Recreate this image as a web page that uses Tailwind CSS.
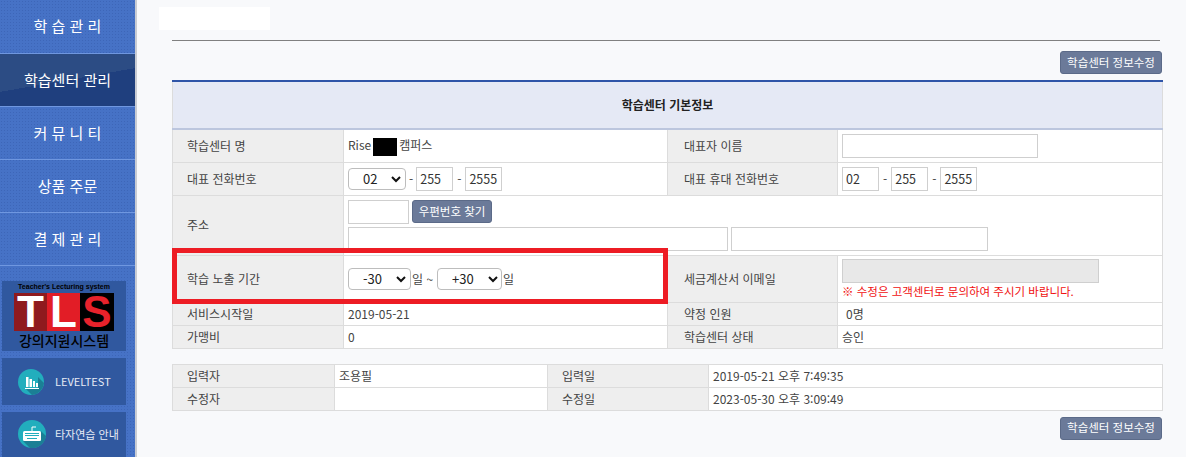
<!DOCTYPE html>
<html lang="ko">
<head>
  <meta charset="UTF-8" />
  <title>학습센터 관리</title>
  <script src="https://cdn.jsdelivr.net/npm/@tailwindcss/browser@4"></script>
</head>
<body class="bg-[#f8f9fb] font-['Noto_Sans_CJK_KR','Noto_Sans',sans-serif] text-[12px] text-[#444]">
<div class="flex h-[457px] w-[1186px] overflow-hidden">

  <!-- Sidebar -->
  <aside class="w-[137px] shrink-0 border-r-2 border-[#c9ccd3] bg-[#4672c6] bg-[radial-gradient(#3d66b8_1px,transparent_1px)] bg-[size:3px_3px] text-white">
    <nav class="text-[15px] text-center">
      <a class="flex h-[54px] items-center justify-center border-b border-[#6f97e0]">학 습 관 리</a>
      <a class="flex h-[53px] items-center justify-center border-b border-[#6f97e0] bg-[linear-gradient(170deg,#2c4c84_0%,#2c4c84_50%,#1f3f7e_50%,#1f3f7e_100%)]">학습센터 관리</a>
      <a class="flex h-[53px] items-center justify-center border-b border-[#6f97e0]">커 뮤 니 티</a>
      <a class="flex h-[53px] items-center justify-center border-b border-[#6f97e0]">상품 주문</a>
      <a class="flex h-[53px] items-center justify-center border-b border-[#6f97e0]">결 제 관 리</a>
    </nav>
    <div class="mt-[15px] ml-[2px] flex w-[124px] flex-col gap-[7px]">
      <!-- TLS logo -->
      <div class="flex h-[70px] flex-col items-center bg-[#30589f] text-black">
        <div class="h-[12px] font-['Liberation_Sans',sans-serif] text-[7px] leading-[12px] font-bold">Teacher's Lecturing system</div>
        <div class="flex h-[38px] w-[100px] font-['Liberation_Sans',sans-serif] text-[44px] leading-[38px] font-bold">
          <span class="w-[33px] bg-[#8f1a1e] text-center text-white">T</span>
          <span class="w-[33px] bg-[#e21d26] text-center text-white">L</span>
          <span class="w-[34px] bg-black text-center text-[#e8222b]">S</span>
        </div>
        <div class="text-[14px] leading-[18px] font-medium whitespace-nowrap">강의지원시스템</div>
      </div>
      <!-- LEVELTEST -->
      <div class="flex h-[47px] items-center bg-[#30589f] pl-[16px]">
        <svg width="26" height="26" viewBox="0 0 26 26" class="shrink-0">
          <circle cx="13" cy="13" r="13" fill="#22aebd"/>
          <path d="M7 19 L14 26 A13 13 0 0 0 26 14 L20 8 V19 Z" fill="#1b7f95"/>
          <path d="M8 8h2.5v10H8zM11.5 10H14v8h-2.5zM15 12h2v6h-2zM18 14h2v4h-2z" fill="#fff"/>
          <path d="M7 19h14v1H7z" fill="#fff"/>
        </svg>
        <span class="ml-[11px] text-[11px] text-[#e6ebf5]">LEVELTEST</span>
      </div>
      <!-- typing -->
      <div class="flex h-[46px] items-start bg-[#30589f] pl-[16px] pt-[8px]">
        <svg width="28" height="28" viewBox="0 0 28 28" class="shrink-0">
          <circle cx="14" cy="14" r="14" fill="#22aebd"/>
          <path d="M5 21 L12 28 A14 14 0 0 0 28 16 L23 11 V21 Z" fill="#1b7f95"/>
          <rect x="5" y="11" width="18" height="10" rx="1.5" fill="#fff"/>
          <path d="M7 13h14v1H7zM7 15h14v1H7zM9 18h10v1H9z" fill="#22aebd"/>
          <path d="M14 11V7h4" fill="none" stroke="#fff" stroke-width="1"/>
        </svg>
        <span class="ml-[9px] mt-[6px] text-[11px] whitespace-nowrap text-[#e6ebf5]">타자연습 안내</span>
      </div>
    </div>
  </aside>

  <!-- Main -->
  <main class="relative w-[1049px] pt-[7px] pl-[22px]">
    <div class="h-[23px] w-[111px] bg-white"></div>
    <div class="ml-[13px] w-[990px]">
      <div class="mt-[10px] h-px w-[988px] bg-[#808080]"></div>
      <div class="mt-[10px] flex h-[23px] justify-end">
        <button class="h-[23px] w-[102px] rounded-[3px] border border-[#5b6a88] bg-[#6b7a99] text-[11.5px] text-white">학습센터 정보수정</button>
      </div>

      <!-- 기본정보 -->
      <div class="relative mt-[6px]">
        <table class="w-[990px] table-fixed border-collapse bg-white">
          <colgroup><col class="w-[171px]"/><col class="w-[324px]"/><col class="w-[170px]"/><col class="w-[325px]"/></colgroup>
          <thead>
            <tr class="h-[48px]">
              <th colspan="4" class="border-x border-x-[#dcdcdc] border-t-2 border-t-[#2f55a8] border-b-2 border-b-[#bcc6de] bg-[#e5e9f5] text-[12px] font-bold text-[#222]">학습센터 기본정보</th>
            </tr>
          </thead>
          <tbody>
            <tr class="h-[33px]">
              <td class="border border-[#dcdcdc] bg-[#eeeeee] pl-[14px]">학습센터 명</td>
              <td class="border border-[#dcdcdc] pl-[4px]">Rise<span class="mx-[2px] inline-block h-[18px] w-[24px] bg-black align-middle"></span>캠퍼스</td>
              <td class="border border-[#dcdcdc] bg-[#eeeeee] pl-[16px]">대표자 이름</td>
              <td class="border border-[#dcdcdc] pl-[4px]"><input class="block h-[24px] w-[196px] border border-[#cfcfcf] bg-white" /></td>
            </tr>
            <tr class="h-[33px]">
              <td class="border border-[#dcdcdc] bg-[#eeeeee] pl-[14px]">대표 전화번호</td>
              <td class="border border-[#dcdcdc] pl-[4px]">
                <div class="flex items-center">
                  <div class="relative h-[22px] w-[58px]">
                    <select class="h-[22px] w-[58px] appearance-none rounded-[4px] border border-[#bdbdbd] bg-white pl-[14px] text-[13px] text-[#222]"><option>02</option></select>
                    <svg class="pointer-events-none absolute top-[8px] left-[43px]" width="10" height="7" viewBox="0 0 10 7"><path d="M1 1l4 4 4-4" fill="none" stroke="#111" stroke-width="2"/></svg>
                  </div>
                  <span class="mx-[3px]">-</span>
                  <input value="255" class="h-[24px] w-[37px] border border-[#cfcfcf] bg-white pl-[3px] text-[12.5px] text-[#333]" />
                  <span class="mx-[4px]">-</span>
                  <input value="2555" class="h-[24px] w-[37px] border border-[#cfcfcf] bg-white pl-[3px] text-[12.5px] text-[#333]" />
                </div>
              </td>
              <td class="border border-[#dcdcdc] bg-[#eeeeee] pl-[16px]">대표 휴대 전화번호</td>
              <td class="border border-[#dcdcdc] pl-[4px]">
                <div class="flex items-center">
                  <input value="02" class="h-[24px] w-[37px] border border-[#cfcfcf] bg-white pl-[3px] text-[12.5px] text-[#333]" />
                  <span class="mx-[4px]">-</span>
                  <input value="255" class="h-[24px] w-[37px] border border-[#cfcfcf] bg-white pl-[3px] text-[12.5px] text-[#333]" />
                  <span class="mx-[4px]">-</span>
                  <input value="2555" class="h-[24px] w-[37px] border border-[#cfcfcf] bg-white pl-[3px] text-[12.5px] text-[#333]" />
                </div>
              </td>
            </tr>
            <tr class="h-[60px]">
              <td class="border border-[#dcdcdc] bg-[#eeeeee] pl-[14px]">주소</td>
              <td colspan="3" class="border border-[#dcdcdc] pl-[4px]">
                <div class="flex items-center gap-[3px]">
                  <input class="h-[24px] w-[61px] border border-[#cfcfcf] bg-white" />
                  <button class="h-[23px] w-[80px] rounded-[3px] border border-[#5b6a88] bg-[#6b7a99] text-[11.5px] text-white">우편번호 찾기</button>
                </div>
                <div class="mt-[3px] flex gap-[3px]">
                  <input class="h-[24px] w-[380px] border border-[#cfcfcf] bg-white" />
                  <input class="h-[24px] w-[257px] border border-[#cfcfcf] bg-white" />
                </div>
              </td>
            </tr>
            <tr class="h-[47px]">
              <td class="border border-[#dcdcdc] bg-[#eeeeee] pl-[14px]">학습 노출 기간</td>
              <td class="border border-[#dcdcdc] pl-[4px]">
                <div class="flex items-center">
                  <div class="relative h-[22px] w-[63px]">
                    <select class="h-[22px] w-[63px] appearance-none rounded-[4px] border border-[#bdbdbd] bg-white pl-[14px] text-[13px] text-[#222]"><option>-30</option></select>
                    <svg class="pointer-events-none absolute top-[8px] left-[48px]" width="10" height="7" viewBox="0 0 10 7"><path d="M1 1l4 4 4-4" fill="none" stroke="#111" stroke-width="2"/></svg>
                  </div>
                  <span class="mx-[1px] w-[24px] whitespace-nowrap">일 ~</span>
                  <div class="relative h-[22px] w-[65px]">
                    <select class="h-[22px] w-[65px] appearance-none rounded-[4px] border border-[#bdbdbd] bg-white pl-[14px] text-[13px] text-[#222]"><option>+30</option></select>
                    <svg class="pointer-events-none absolute top-[8px] left-[51px]" width="10" height="7" viewBox="0 0 10 7"><path d="M1 1l4 4 4-4" fill="none" stroke="#111" stroke-width="2"/></svg>
                  </div>
                  <span class="ml-[1px]">일</span>
                </div>
              </td>
              <td class="border border-[#dcdcdc] bg-[#eeeeee] pl-[16px]">세금계산서 이메일</td>
              <td class="border border-[#dcdcdc] pl-[4px]">
                <input disabled class="block h-[24px] w-[257px] border border-[#cfcfcf] bg-[#e8e8e8]" />
                <div class="mt-[1px] h-[15px] text-[11.5px] leading-[15px] text-[#f01010]">※ 수정은 고객센터로 문의하여 주시기 바랍니다.</div>
              </td>
            </tr>
            <tr class="h-[23px]">
              <td class="border border-[#dcdcdc] bg-[#eeeeee] pl-[14px]">서비스시작일</td>
              <td class="border border-[#dcdcdc] pl-[4px]">2019-05-21</td>
              <td class="border border-[#dcdcdc] bg-[#eeeeee] pl-[16px]">약정 인원</td>
              <td class="border border-[#dcdcdc] pl-[8px]">0명</td>
            </tr>
            <tr class="h-[23px]">
              <td class="border border-[#dcdcdc] bg-[#eeeeee] pl-[14px]">가맹비</td>
              <td class="border border-[#dcdcdc] pl-[4px]">0</td>
              <td class="border border-[#dcdcdc] bg-[#eeeeee] pl-[16px]">학습센터 상태</td>
              <td class="border border-[#dcdcdc] pl-[4px]">승인</td>
            </tr>
          </tbody>
        </table>
        <!-- highlight box over the 기간 row -->
        <div class="pointer-events-none absolute top-[168px] left-0 h-[56px] w-[496px] border-[5px] border-[#ed1c24]"></div>
      </div>

      <!-- 입력/수정 -->
      <table class="mt-[15px] w-[990px] table-fixed border-collapse bg-white">
        <colgroup><col class="w-[162px]"/><col class="w-[213px]"/><col class="w-[161px]"/><col class="w-[454px]"/></colgroup>
        <tr class="h-[23px]">
          <td class="border border-[#dcdcdc] bg-[#eeeeee] pl-[14px]">입력자</td>
          <td class="border border-[#dcdcdc] pl-[4px]">조용필</td>
          <td class="border border-[#dcdcdc] bg-[#eeeeee] pl-[14px]">입력일</td>
          <td class="border border-[#dcdcdc] pl-[4px]">2019-05-21 오후 7:49:35</td>
        </tr>
        <tr class="h-[23px]">
          <td class="border border-[#dcdcdc] bg-[#eeeeee] pl-[14px]">수정자</td>
          <td class="border border-[#dcdcdc] pl-[4px]"></td>
          <td class="border border-[#dcdcdc] bg-[#eeeeee] pl-[14px]">수정일</td>
          <td class="border border-[#dcdcdc] pl-[4px]">2023-05-30 오후 3:09:49</td>
        </tr>
      </table>

      <div class="mt-[6px] flex justify-end">
        <button class="h-[23px] w-[102px] rounded-[3px] border border-[#5b6a88] bg-[#6b7a99] text-[11.5px] text-white">학습센터 정보수정</button>
      </div>
    </div>
  </main>
</div>
</body>
</html>
